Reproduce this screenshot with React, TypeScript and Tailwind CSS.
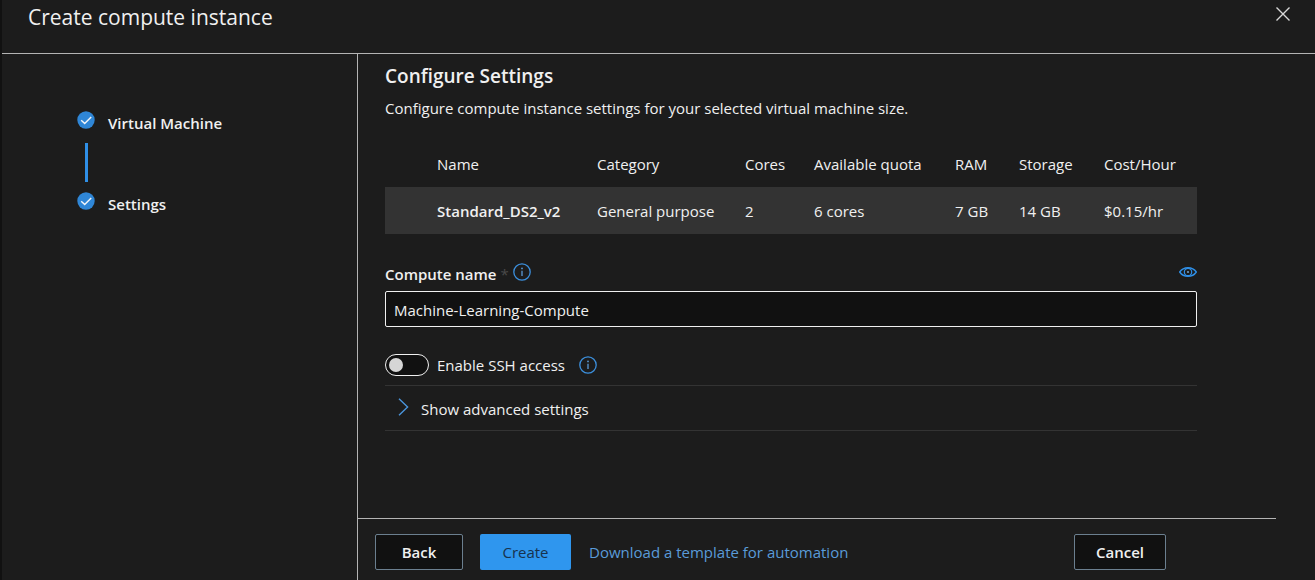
import React, { useState } from "react";

type Size = {
  name: string;
  category: string;
  cores: string;
  quota: string;
  ram: string;
  storage: string;
  cost: string;
};

const sizes: Size[] = [
  {
    name: "Standard_DS2_v2",
    category: "General purpose",
    cores: "2",
    quota: "6 cores",
    ram: "7 GB",
    storage: "14 GB",
    cost: "$0.15/hr",
  },
];

function CheckBadge() {
  return (
    <svg className="size-[18px] shrink-0" viewBox="0 0 18 18" aria-hidden="true">
      <circle cx="9" cy="9" r="8.7" fill="#2f86d6" />
      <path d="M4.2 9.3 7.7 12.5 14.2 6" fill="none" stroke="#f2f6fa" strokeWidth="1.5" />
    </svg>
  );
}

function InfoIcon() {
  return (
    <svg className="size-[18px]" viewBox="0 0 18 18" aria-hidden="true">
      <circle cx="9" cy="9" r="8.2" fill="none" stroke="#3c8fdc" strokeWidth="1.3" />
      <path d="M9 7.7V13" stroke="#5b9bd8" strokeWidth="1.3" />
      <circle cx="9" cy="5.4" r="0.9" fill="#5b9bd8" />
    </svg>
  );
}

function EyeIcon() {
  return (
    <svg className="h-[10px] w-[18px]" viewBox="0 0 18 10" aria-hidden="true">
      <path
        d="M0.7 5C2.6 2.2 5.4 0.7 9 0.7S15.4 2.2 17.3 5C15.4 7.8 12.6 9.3 9 9.3S2.6 7.8 0.7 5Z"
        fill="none"
        stroke="#2f8fe6"
        strokeWidth="1.4"
      />
      <circle cx="9" cy="5" r="3.7" fill="none" stroke="#2f8fe6" strokeWidth="1.2" />
      <circle cx="9" cy="5" r="1.1" fill="#6f9cc4" />
    </svg>
  );
}

export default function App() {
  const [name, setName] = useState("Machine-Learning-Compute");
  const [ssh, setSsh] = useState(false);

  return (
    <div className="flex min-h-screen flex-col border-l-2 border-[#111111] bg-[#1c1c1c] font-['Open_Sans','Noto_Sans',sans-serif] text-[15px] leading-5 text-[#f0f0f0]">
      <header className="flex items-start justify-between border-b border-[#b4b4b4] pr-[22px] pb-[22px] pl-[26px]">
        <h1 className="pt-[3px] text-[21px] leading-7">Create compute instance</h1>
        <button type="button" aria-label="Close" className="mt-1 p-0.5">
          <svg className="size-4" viewBox="0 0 16 16" aria-hidden="true">
            <path d="M1.5 1.5 14.5 14.5M14.5 1.5 1.5 14.5" stroke="#d8d8d8" strokeWidth="1.4" />
          </svg>
        </button>
      </header>

      <div className="flex grow">
        <nav className="w-[356px] shrink-0 border-r border-[#b4b4b4] pt-[57px] pl-[75px]" aria-label="Steps">
          <ol className="font-semibold">
            <li>
              <div className="flex gap-[13px]">
                <CheckBadge />
                <span className="pt-0.5">Virtual Machine</span>
              </div>
              <div className="my-[10px] ml-2 h-[39px] w-[3px] bg-[#2f8fe6]" />
            </li>
            <li className="flex gap-[13px]" aria-current="step">
              <CheckBadge />
              <span className="pt-0.5">Settings</span>
            </li>
          </ol>
        </nav>

        <div className="flex min-w-0 grow flex-col">
          <main className="grow pt-2 pr-[118px] pl-[27px]">
            <h2 className="text-[19px] leading-7 font-semibold">Configure Settings</h2>
            <p className="mt-2">Configure compute instance settings for your selected virtual machine size.</p>

            <table className="mt-[22px] w-full table-fixed text-left">
              <thead>
                <tr className="h-[47px] whitespace-nowrap">
                  <th scope="col" className="w-[212px] pl-[52px] font-normal">Name</th>
                  <th scope="col" className="w-[148px] font-normal">Category</th>
                  <th scope="col" className="w-[69px] font-normal">Cores</th>
                  <th scope="col" className="w-[141px] font-normal">Available quota</th>
                  <th scope="col" className="w-16 font-normal">RAM</th>
                  <th scope="col" className="w-[85px] font-normal">Storage</th>
                  <th scope="col" className="font-normal">Cost/Hour</th>
                </tr>
              </thead>
              <tbody>
                {sizes.map((s) => (
                  <tr key={s.name} className="h-[47px] bg-[#333333] whitespace-nowrap">
                    <td className="pl-[52px] font-semibold">{s.name}</td>
                    <td>{s.category}</td>
                    <td>{s.cores}</td>
                    <td>{s.quota}</td>
                    <td>{s.ram}</td>
                    <td>{s.storage}</td>
                    <td>{s.cost}</td>
                  </tr>
                ))}
              </tbody>
            </table>

            <div className="mt-7 flex items-start">
              <label htmlFor="compute-name" className="pt-0.5 font-semibold">
                Compute name <span className="font-normal text-[#4a4a4a]">*</span>
              </label>
              <button type="button" aria-label="About the compute name" className="ml-1 pt-px">
                <InfoIcon />
              </button>
              <button type="button" aria-label="Preview" className="ml-auto pt-[5px]">
                <EyeIcon />
              </button>
            </div>
            <input
              id="compute-name"
              type="text"
              value={name}
              onChange={(e) => setName(e.target.value)}
              className="mt-[7px] block h-9 w-full rounded-xs border border-[#f0f0f0] bg-[#111111] px-2 pt-0.5"
            />

            <div className="mt-[27px] flex items-center pb-[9px]">
              <input
                id="ssh"
                type="checkbox"
                role="switch"
                checked={ssh}
                onChange={(e) => setSsh(e.target.checked)}
                className="flex h-[22px] w-11 appearance-none items-center rounded-full border border-[#f0f0f0] bg-[#111111] px-[3px] before:size-[14px] before:rounded-full before:bg-[#d6d6d6] checked:justify-end checked:bg-[#2f96ee]"
              />
              <label htmlFor="ssh" className="pl-2">Enable SSH access</label>
              <button type="button" aria-label="About SSH access" className="ml-[14px]">
                <InfoIcon />
              </button>
            </div>

            <button
              type="button"
              aria-expanded="false"
              className="flex h-[46px] w-full items-center gap-3 border-y border-[#333333] pl-[13px] text-left"
            >
              <svg className="mb-0.5 h-[18px] w-[11px]" viewBox="0 0 11 18" aria-hidden="true">
                <path d="M1 0.7 9.6 9 1 17.3" fill="none" stroke="#4a94da" strokeWidth="1.4" />
              </svg>
              <span className="pt-0.5">Show advanced settings</span>
            </button>
          </main>

          <footer className="mr-[39px] flex items-center border-t border-[#b4b4b4] pt-[15px] pr-[110px] pb-[10px] pl-[17px]">
            <button
              type="button"
              className="h-9 w-[88px] rounded-xs border border-[#6b7f8f] bg-[#111111] font-semibold"
            >
              Back
            </button>
            <button type="button" className="ml-[17px] h-9 w-[91px] rounded-xs bg-[#2f96ee] text-[#17324d]">
              Create
            </button>
            <a href="#template" className="ml-[18px] text-[#5a9bd8]">
              Download a template for automation
            </a>
            <button
              type="button"
              className="ml-auto h-9 w-[92px] rounded-xs border border-[#6b7f8f] bg-[#111111] font-semibold"
            >
              Cancel
            </button>
          </footer>
        </div>
      </div>
    </div>
  );
}
